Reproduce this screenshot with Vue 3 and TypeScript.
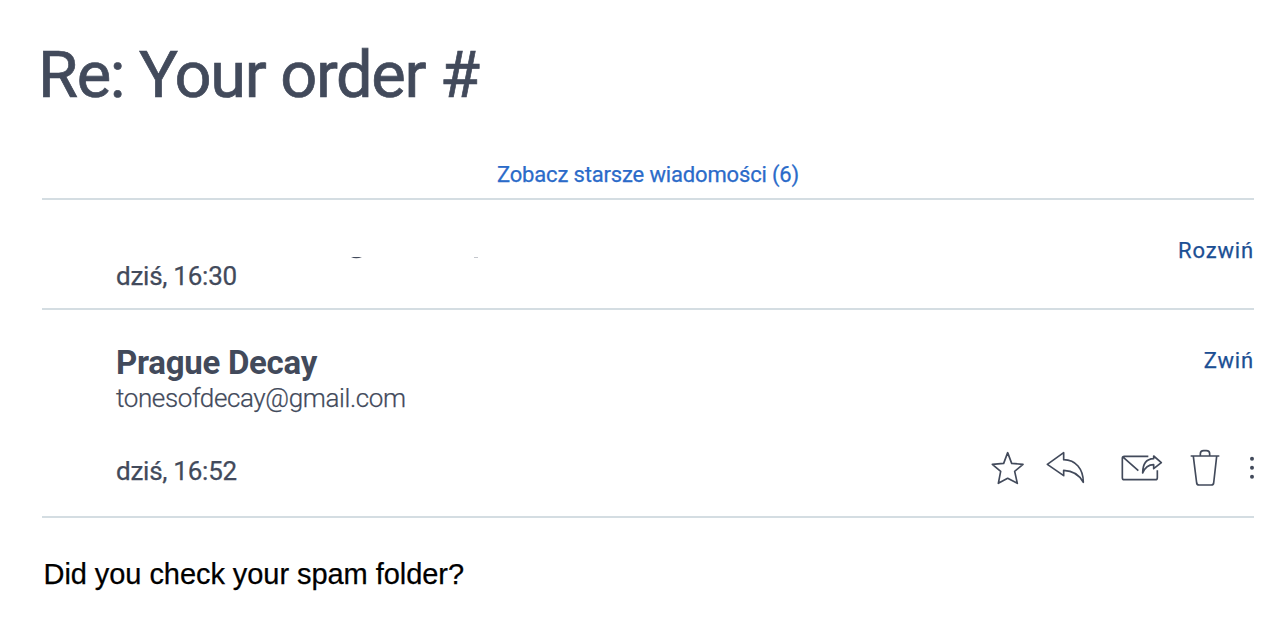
<script setup lang="ts">
import { ref } from 'vue'

interface Message {
  id: number
  name: string
  email: string
  date: string
  body: string
  isOpen: boolean
}

const olderCount = ref<number>(6)

const messages = ref<Message[]>([
  { id: 1, name: '', email: '', date: 'dziś, 16:30', body: '', isOpen: false },
  {
    id: 2,
    name: 'Prague Decay',
    email: 'tonesofdecay@gmail.com',
    date: 'dziś, 16:52',
    body: 'Did you check your spam folder?',
    isOpen: true
  }
])

function toggleMessage(message: Message) {
  message.isOpen = !message.isOpen
}
</script>

<template>
  <main class="thread">
    <h1 class="thread-title">Re: Your order #</h1>

    <div class="older">
      <button class="older-btn">Zobacz starsze wiadomości ({{ olderCount }})</button>
    </div>

    <article v-for="message in messages" :key="message.id">
      <header :class="['message', { isOpen: message.isOpen }]">
        <div class="sender">
          <template v-if="message.isOpen">
            <h2 class="sender-name">{{ message.name }}</h2>
            <p class="sender-email">{{ message.email }}</p>
          </template>
          <!-- lower edge of the hidden address -->
          <svg v-else class="sender-hidden" width="140" height="3" viewBox="0 0 140 3">
            <path d="M10 0 Q15 2.4 21 0Z" />
            <path class="faint" d="M133 .5h4" />
          </svg>
          <p class="date">{{ message.date }}</p>
        </div>

        <div class="side">
          <button class="toggle-btn" @click="toggleMessage(message)">
            {{ message.isOpen ? 'Zwiń' : 'Rozwiń' }}
          </button>

          <div v-if="message.isOpen" class="actions">
            <button class="action star" aria-label="Oznacz">
              <svg width="34" height="40" viewBox="0 0 102 120">
                <path d="M50 14 62 46 96 49 71 70 79 106 50 91 22 106 29 70 4 49 38 46Z" />
              </svg>
            </button>
            <button class="action reply" aria-label="Odpowiedz">
              <svg width="40" height="40" viewBox="0 0 120 120">
                <path d="M4 49 53 14V35C89 35 112 63 112 103C101 82 82 68 53 67V83Z" />
              </svg>
            </button>
            <button class="action forward" aria-label="Przekaż">
              <svg width="42" height="40" viewBox="0 0 126 120">
                <path d="M82 25H10Q4 25 4 31V89Q4 95 10 95H103Q109 95 109 89V67M7 28 52 68" />
                <path d="M65 75C65 46 75 33 98 32V24L121 44 98 62V50C81 50 72 58 65 75Z" />
              </svg>
            </button>
            <button class="action trash" aria-label="Usuń">
              <svg width="30" height="40" viewBox="0 0 90 120">
                <path d="M2 24H88M10 25 20 105Q21 111 27 111H64Q70 111 71 105L80 25M31 23V17Q31 8 41 8H49Q59 8 59 17V23" />
              </svg>
            </button>
            <button class="action more" aria-label="Więcej">
              <svg width="6" height="40" viewBox="0 0 18 120">
                <circle cx="9" cy="32" r="6" />
                <circle cx="9" cy="59" r="6" />
                <circle cx="9" cy="86" r="6" />
              </svg>
            </button>
          </div>
        </div>
      </header>

      <p v-if="message.isOpen" class="message-body">{{ message.body }}</p>
    </article>
  </main>
</template>

<style>
body {
  background: #fff;
}
</style>

<style scoped>
.thread {
  box-sizing: border-box;
  width: 1279px;
  height: 617px;
  padding: 37px 25px 0 42px;
  overflow: hidden;
  color: #424a5b;
  font-family: Roboto, sans-serif;
}

h1,
h2,
p {
  margin: 0;
}

button {
  padding: 0;
  border: none;
  background: none;
  font-family: inherit;
  cursor: pointer;
}

.thread-title {
  height: 123px;
  margin-left: -4px;
  font-size: 65px;
  line-height: 76px;
  font-weight: 400;
  letter-spacing: -1.35px;
  -webkit-text-stroke: 0.7px currentColor;
}

.older {
  display: flex;
  justify-content: center;
  padding-bottom: 8px;
  border-bottom: 2px solid #d4dde2;

  .older-btn {
    color: #2b6bc9;
    font-size: 22px;
    line-height: 30px;
    letter-spacing: -0.16px;
    -webkit-text-stroke: 0.25px currentColor;
  }
}

.message {
  box-sizing: border-box;
  display: flex;
  justify-content: space-between;
  height: 110px;
  padding: 36px 0 0 74px;
  border-bottom: 2px solid #d4dde2;

  &.isOpen {
    height: 208px;
  }
}

.sender {
  .sender-name {
    font-size: 33px;
    line-height: 34px;
    font-weight: 700;
    letter-spacing: -0.28px;
  }

  .sender-email {
    margin-bottom: 40px;
    font-size: 26px;
    line-height: 36px;
    font-weight: 300;
    letter-spacing: -0.38px;
    -webkit-text-stroke: 0.25px currentColor;
  }

  .date {
    font-size: 26px;
    line-height: 30px;
    letter-spacing: -0.25px;
    -webkit-text-stroke: 0.25px currentColor;
  }

  .sender-hidden {
    display: block;
    margin: 21px 0 1px 225px;
    fill: #424a5b;

    .faint {
      stroke: #c4c7cd;
    }
  }
}

.side {
  display: flex;
  flex-direction: column;
  align-items: flex-end;

  .toggle-btn {
    color: #1c4f94;
    font-size: 22px;
    line-height: 30px;
    letter-spacing: 0.85px;
    -webkit-text-stroke: 0.25px currentColor;
  }
}

.actions {
  display: flex;
  margin: 72px -1px 0 0;

  .action {
    height: 40px;
  }

  svg {
    display: block;
    fill: none;
    stroke: #424a5b;
    stroke-width: 5;
    stroke-linejoin: round;
  }

  .reply {
    margin-left: 21px;
  }

  .forward {
    margin-left: 35px;
  }

  .trash {
    margin-left: 27px;
  }

  .more {
    margin-left: 29px;

    svg {
      fill: #424a5b;
      stroke: none;
    }
  }
}

.message-body {
  padding: 37px 0 0 1.5px;
  color: #000;
  font-family: 'Liberation Sans', Arial, sans-serif;
  font-size: 29px;
  line-height: 38px;
  letter-spacing: -0.06px;
  -webkit-text-stroke: 0.25px currentColor;
}
</style>
